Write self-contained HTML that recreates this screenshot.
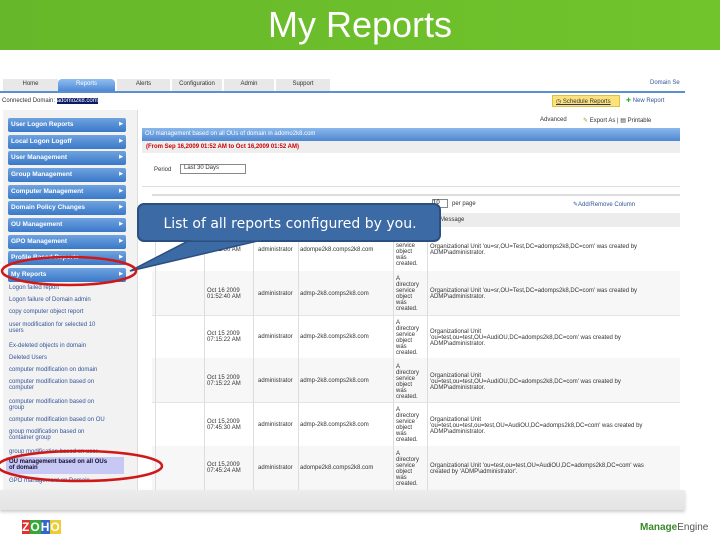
<!DOCTYPE html>
<html><head><style>
*{margin:0;padding:0;box-sizing:border-box}
body{width:720px;height:540px;overflow:hidden;background:#fff;position:relative;font-family:"Liberation Sans",Verdana,sans-serif}
.a{position:absolute}
.t{font-size:6px;color:#333;white-space:nowrap}
.btn{position:absolute;left:8px;width:118px;height:14px;background:linear-gradient(#6fa3e0,#3a78c8);border-radius:2px;color:#fff;font-size:6.5px;font-weight:bold;padding:3px 0 0 3px}
.btn:after{content:"▶";position:absolute;right:3px;top:3px;font-size:5px}
.lk{position:absolute;left:9px;font-size:6px;color:#335599;white-space:nowrap}
.tab{position:absolute;top:79px;height:12px;background:#e8e8e8;font-size:6px;color:#333;text-align:center;padding-top:2px}
.vl{position:absolute;top:240px;height:250px;width:1px;background:#ddd}
</style></head><body>
<div class="a" style="left:0;top:0;width:720px;height:50px;background:linear-gradient(90deg,#66b82a,#72c42c)"></div>
<div class="a" style="left:0;top:4px;width:720px;text-align:center;color:#fff;font-size:36px;font-family:'Liberation Sans',sans-serif;">My Reports</div>

<div class="a" style="left:0;top:74px;width:685px;height:418px;background:#fff"></div>
<div class="tab" style="left:3px;width:55px">Home</div>
<div class="tab" style="left:58px;width:57px;background:linear-gradient(#8fbdf0,#4f8ad6);color:#fff;border-radius:4px 4px 0 0">Reports</div>
<div class="tab" style="left:117px;width:53px">Alerts</div>
<div class="tab" style="left:172px;width:50px">Configuration</div>
<div class="tab" style="left:224px;width:50px">Admin</div>
<div class="tab" style="left:276px;width:54px">Support</div>
<div class="a" style="left:0;top:91px;width:685px;height:2px;background:#5b8fd0"></div>
<div class="a t" style="left:650px;top:80px;color:#335599">Domain Se</div>
<div class="a t" style="left:2px;top:98px">Connected Domain: <span style="background:#0a1a66;color:#fff">adomo2k8.com</span></div>
<div class="a" style="left:552px;top:95px;width:68px;height:12px;background:#fbe27a;border:1px solid #e0c040;font-size:6px;color:#335;padding:2px 0 0 3px;text-decoration:underline">◷ Schedule Reports</div>
<div class="a t" style="left:626px;top:97px;color:#335599"><span style="color:#3a3">✚</span> New Report</div>

<div class="a" style="left:3px;top:110px;width:135px;height:382px;background:#f2f2f2;border-right:1px solid #ddd"></div>
<div class="btn" style="top:118px">User Logon Reports</div>
<div class="btn" style="top:135px">Local Logon Logoff</div>
<div class="btn" style="top:151px">User Management</div>
<div class="btn" style="top:168px">Group Management</div>
<div class="btn" style="top:185px">Computer Management</div>
<div class="btn" style="top:201px">Domain Policy Changes</div>
<div class="btn" style="top:218px">OU Management</div>
<div class="btn" style="top:235px">GPO Management</div>
<div class="btn" style="top:251px">Profile Based Reports</div>
<div class="btn" style="top:268px">My Reports</div>
<div class="lk" style="top:285px">Logon failed report</div>
<div class="lk" style="top:297px">Logon failure of Domain admin</div>
<div class="lk" style="top:309px">copy computer object report</div>
<div class="lk" style="top:322px">user modification for selected 10<br>users</div>
<div class="lk" style="top:343px">Ex-deleted objects in domain</div>
<div class="lk" style="top:355px">Deleted Users</div>
<div class="lk" style="top:367px">computer modification on domain</div>
<div class="lk" style="top:379px">computer modification based on<br>computer</div>
<div class="lk" style="top:399px">computer modification based on<br>group</div>
<div class="lk" style="top:417px">computer modification based on OU</div>
<div class="lk" style="top:429px">group modification based on<br>container group</div>
<div class="lk" style="top:449px">group modification based on user</div>
<div class="a" style="left:6px;top:457px;width:118px;height:17px;background:#c8c8f4"></div>
<div class="lk" style="top:459px;color:#113;font-weight:bold">OU management based on all OUs<br>of domain</div>
<div class="lk" style="top:478px">GPO management on Domain</div>

<div class="a t" style="left:540px;top:117px">Advanced</div>
<div class="a t" style="left:583px;top:117px"><span style="color:#8a3">✎</span> Export As | ▤ Printable</div>
<div class="a" style="left:142px;top:128px;width:538px;height:13px;background:linear-gradient(#8ab8ec,#4f88d0);color:#fff;font-size:6px;padding:3px 0 0 3px">OU management based on all OUs of domain in adomo2k8.com</div>
<div class="a" style="left:142px;top:141px;width:538px;height:12px;background:#eee"></div>
<div class="a t" style="left:146px;top:144px;color:#c00;font-weight:bold">(From Sep 16,2009 01:52 AM to Oct 16,2009 01:52 AM)</div>
<div class="a t" style="left:154px;top:167px">Period</div>
<div class="a" style="left:180px;top:164px;width:66px;height:10px;border:1px solid #888;font-size:6px;padding-left:3px;color:#333">Last 30 Days</div>
<div class="a" style="left:142px;top:186px;width:538px;height:1px;background:#ddd"></div>
<div class="a" style="left:152px;top:194px;width:528px;height:2px;background:#ddd"></div>
<div class="a" style="left:432px;top:199px;width:16px;height:9px;border:1px solid #888;font-size:6px">10</div>
<div class="a t" style="left:452px;top:201px">per page</div>
<div class="a t" style="left:573px;top:201px;color:#335599">✎Add/Remove Column</div>
<div class="a" style="left:152px;top:213px;width:528px;height:14px;background:#ececec"></div>
<div class="a t" style="left:440px;top:217px">Message</div>

<div class="a" style="left:152px;top:271px;width:528px;height:44px;background:#f7f7f7"></div>
<div class="a" style="left:152px;top:358px;width:528px;height:44px;background:#f7f7f7"></div>
<div class="a" style="left:152px;top:446px;width:528px;height:44px;background:#f7f7f7"></div>
<div class="a" style="left:152px;top:315px;width:528px;height:1px;background:#e4e4e4"></div>
<div class="a" style="left:152px;top:402px;width:528px;height:1px;background:#e4e4e4"></div>
<div class="vl" style="left:155px"></div><div class="vl" style="left:204px"></div><div class="vl" style="left:253px"></div><div class="vl" style="left:298px"></div><div class="vl" style="left:393px"></div><div class="vl" style="left:427px"></div>

<div class="a t" style="left:207px;top:247px">01:52:50 AM</div><div class="a t" style="left:258px;top:247px">administrator</div><div class="a t" style="left:300px;top:247px">adompe2k8.comps2k8.com</div><div class="a t" style="left:396px;top:243px">service<br>object<br>was<br>created.</div><div class="a t" style="left:430px;top:244px">Organizational Unit 'ou=sr,OU=Test,DC=adomps2k8,DC=com' was created by<br>ADMP\administrator.</div>
<div class="a t" style="left:207px;top:288px">Oct 16 2009<br>01:52:40 AM</div><div class="a t" style="left:258px;top:291px">administrator</div><div class="a t" style="left:300px;top:291px">admp-2k8.comps2k8.com</div><div class="a t" style="left:396px;top:276px">A<br>directory<br>service<br>object<br>was<br>created.</div><div class="a t" style="left:430px;top:288px">Organizational Unit 'ou=sr,OU=Test,DC=adomps2k8,DC=com' was created by<br>ADMP\administrator.</div>
<div class="a t" style="left:207px;top:331px">Oct 15 2009<br>07:15:22 AM</div><div class="a t" style="left:258px;top:334px">administrator</div><div class="a t" style="left:300px;top:334px">admp-2k8.comps2k8.com</div><div class="a t" style="left:396px;top:320px">A<br>directory<br>service<br>object<br>was<br>created.</div><div class="a t" style="left:430px;top:329px">Organizational Unit<br>'ou=test,ou=test,OU=AudiOU,DC=adomps2k8,DC=com' was created by<br>ADMP\administrator.</div>
<div class="a t" style="left:207px;top:375px">Oct 15 2009<br>07:15:22 AM</div><div class="a t" style="left:258px;top:378px">administrator</div><div class="a t" style="left:300px;top:378px">admp-2k8.comps2k8.com</div><div class="a t" style="left:396px;top:364px">A<br>directory<br>service<br>object<br>was<br>created.</div><div class="a t" style="left:430px;top:373px">Organizational Unit<br>'ou=test,ou=test,OU=AudiOU,DC=adomps2k8,DC=com' was created by<br>ADMP\administrator.</div>
<div class="a t" style="left:207px;top:419px">Oct 15,2009<br>07:45:30 AM</div><div class="a t" style="left:258px;top:422px">administrator</div><div class="a t" style="left:300px;top:422px">admp-2k8.comps2k8.com</div><div class="a t" style="left:396px;top:407px">A<br>directory<br>service<br>object<br>was<br>created.</div><div class="a t" style="left:430px;top:417px">Organizational Unit<br>'ou=test,ou=test,ou=test,OU=AudiOU,DC=adomps2k8,DC=com' was created by<br>ADMP\administrator.</div>
<div class="a t" style="left:207px;top:462px">Oct 15,2009<br>07:45:24 AM</div><div class="a t" style="left:258px;top:465px">administrator</div><div class="a t" style="left:300px;top:465px">adompe2k8.comps2k8.com</div><div class="a t" style="left:396px;top:451px">A<br>directory<br>service<br>object<br>was<br>created.</div><div class="a t" style="left:430px;top:463px">Organizational Unit 'ou=test,ou=test,OU=AudiOU,DC=adomps2k8,DC=com' was<br>created by 'ADMP\administrator'.</div>

<div class="a" style="left:0;top:490px;width:685px;height:20px;background:linear-gradient(#ececec,#e4e4e4);box-shadow:0 2px 3px #ccc"></div>

<div class="a" style="left:22px;top:520px;font-size:12px;font-weight:bold;letter-spacing:1px"><span style="background:#d33;color:#fff">Z</span><span style="background:#3a3;color:#fff">O</span><span style="background:#36c;color:#fff">H</span><span style="background:#ec3;color:#fff">O</span></div>
<div class="a" style="left:640px;top:522px;font-size:10px;color:#3a8a2a"><b>Manage</b><span style="color:#555">Engine</span></div>

<svg class="a" style="left:0;top:0" width="720" height="540">
<path d="M190 240 L130 271 L262 240 Z" fill="#3b6aa5" stroke="#2a4f80" stroke-width="1.5"/>
<rect x="138" y="204" width="302" height="37" rx="6" fill="#3b6aa5" stroke="#2a4f80" stroke-width="2"/>
<path d="M191 239 L261 239" stroke="#3b6aa5" stroke-width="3"/>
<text x="290" y="228" text-anchor="middle" fill="#fff" font-family="DejaVu Sans,Liberation Sans,sans-serif" font-size="14">List of all reports configured by you.</text>
<ellipse cx="69" cy="271" rx="67" ry="14" fill="none" stroke="#d01818" stroke-width="2.5"/>
<ellipse cx="80" cy="466" rx="82" ry="15" fill="none" stroke="#d01818" stroke-width="2.5"/>
</svg>
</body></html>
